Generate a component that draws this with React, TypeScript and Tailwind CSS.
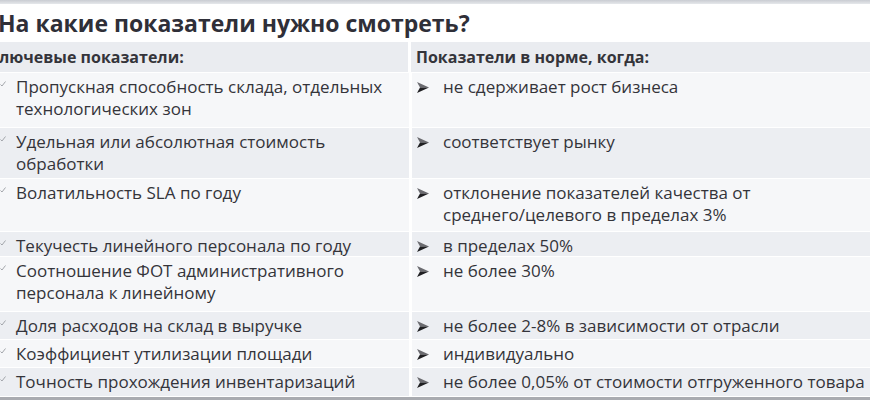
import React from 'react';

type Row = { left: string[]; right: string[]; h: string; bg: string };

const rows: Row[] = [
  { left: ['Пропускная способность склада, отдельных', 'технологических зон'], right: ['не сдерживает рост бизнеса'], h: 'h-[55px]', bg: 'bg-[#f6f7f9]' },
  { left: ['Удельная или абсолютная стоимость', 'обработки'], right: ['соответствует рынку'], h: 'h-[51px]', bg: 'bg-[#eceef2]' },
  { left: ['Волатильность SLA по году'], right: ['отклонение показателей качества от', 'среднего/целевого в пределах 3%'], h: 'h-[53px]', bg: 'bg-[#f6f7f9]' },
  { left: ['Текучесть линейного персонала по году'], right: ['в пределах 50%'], h: 'h-[25px]', bg: 'bg-[#eceef2]' },
  { left: ['Соотношение ФОТ административного', 'персонала к линейному'], right: ['не более 30%'], h: 'h-[55px]', bg: 'bg-[#f6f7f9]' },
  { left: ['Доля расходов на склад в выручке'], right: ['не более 2-8% в зависимости от отрасли'], h: 'h-[28px]', bg: 'bg-[#eceef2]' },
  { left: ['Коэффициент утилизации площади'], right: ['индивидуально'], h: 'h-[28px]', bg: 'bg-[#f6f7f9]' },
  { left: ['Точность прохождения инвентаризаций'], right: ['не более 0,05% от стоимости отгруженного товара'], h: 'h-[29px]', bg: 'bg-[#eceef2]' },
];

const Tick = () => (
  <svg width="6" height="6" viewBox="0 0 6 6" className="absolute left-0 top-[8px]">
    <polyline points="0.5,3.5 2,5 5.5,0.5" fill="none" stroke="#9a9ca2" strokeWidth="0.9" />
  </svg>
);

const Arrow = () => (
  <svg width="12" height="11" viewBox="0 0 12 11" className="shrink-0 mt-[6px]">
    <polygon points="0,0 12,5.5 3,5.5" fill="#6b6b70" />
    <polygon points="0,11 12,5.5 3,5.5" fill="#1f1f22" />
  </svg>
);

export default function App() {
  return (
    <div className="w-[870px] h-[400px] overflow-hidden bg-white flex flex-col text-[#34343a]" style={{ fontFamily: '"Open Sans", "Noto Sans", sans-serif' }}>
      <div className="h-[4px] bg-gradient-to-b from-[#c9ccd2] to-[#e6e8eb]" />
      <div className="h-[38px] flex items-center -ml-[2px]">
        <h1 className="text-[23px] font-bold leading-none text-[#2f2f38]">На какие показатели нужно смотреть?</h1>
      </div>
      <div className="flex h-[31px] bg-[#eaecf0] border-b border-white font-bold text-[16px] text-[#34343a]">
        <div className="w-[409px] flex items-center -ml-[1px]">лючевые показатели:</div>
        <div className="flex-1 flex items-center pl-[5px] border-l-[3px] border-white">Показатели в норме, когда:</div>
      </div>
      {rows.map((r, i) => (
        <div key={i} className={`flex ${r.h} ${r.bg} border-b border-white text-[17px] leading-[22px]`}>
          <div className="w-[409px] relative pl-[16px] pt-[3px]">
            <Tick />
            {r.left.map((t, j) => (
              <div key={j} className="whitespace-nowrap">{t}</div>
            ))}
          </div>
          <div className="flex-1 flex gap-[14px] pl-[5px] pt-[3px] border-l-[3px] border-white">
            <Arrow />
            <div>
              {r.right.map((t, j) => (
                <div key={j} className="whitespace-nowrap">{t}</div>
              ))}
            </div>
          </div>
        </div>
      ))}
      <div className="flex-1 bg-[#a9abb0]" />
    </div>
  );
}
